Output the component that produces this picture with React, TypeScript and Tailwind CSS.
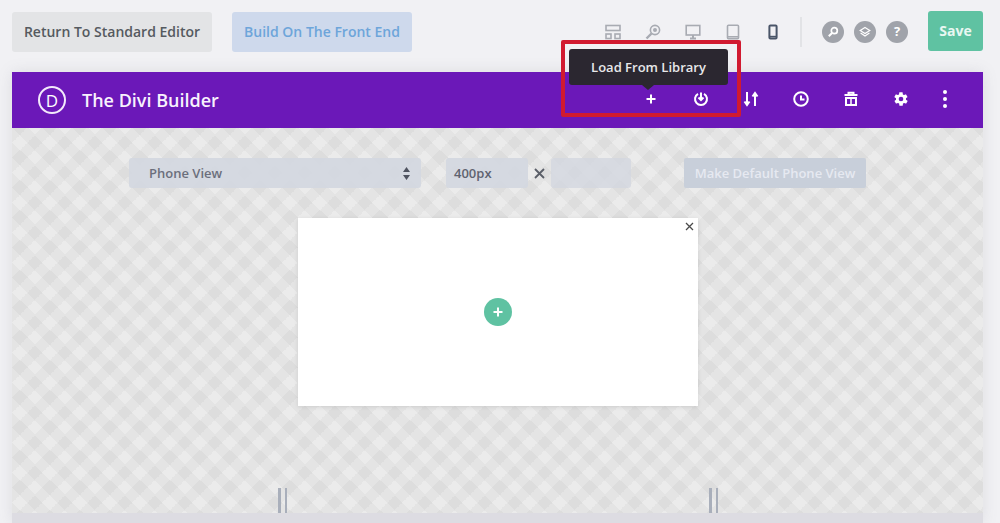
const GrayIcon = ({ children, className = "text-[#a8abb2]" }: { children: React.ReactNode; className?: string }) => (
  <svg className={`w-4 h-4 ${className}`} viewBox="0 0 16 16" fill="none" stroke="currentColor" strokeWidth="1.6">
    {children}
  </svg>
)

const PurpleIcon = ({ children }: { children: React.ReactNode }) => (
  <svg className="w-4 h-4 text-white" viewBox="0 0 16 16" fill="none" stroke="currentColor" strokeWidth="2">
    {children}
  </svg>
)

const Handle = () => (
  <div className="flex gap-1 h-[25px]">
    <div className="w-[3px] bg-[#a9afbb]"></div>
    <div className="w-[2px] bg-[#a9afbb]"></div>
  </div>
)

export default function App() {
  return (
    <div className="relative w-[1000px] h-[523px] overflow-hidden bg-[#f1f1f4] font-['Open_Sans',sans-serif]">
      {/* top toolbar */}
      <div className="flex items-center h-[72px] pl-3 pr-[17px] pb-2">
        <button className="w-[200px] h-10 rounded-[3px] bg-[#e3e4e6] text-sm font-semibold text-[#555a60]">Return To Standard Editor</button>
        <button className="w-[180px] h-10 ml-5 rounded-[3px] bg-[#ced9ec] text-sm font-semibold text-[#6da5da]">Build On The Front End</button>

        <div className="flex items-center gap-6 ml-[193px]">
          <GrayIcon>
            <rect x="1" y="1.5" width="14" height="5" />
            <rect x="1" y="10" width="5" height="4.5" />
            <rect x="10" y="10" width="5" height="4.5" />
          </GrayIcon>
          <GrayIcon>
            <circle cx="10" cy="6" r="4.6" />
            <circle cx="10" cy="6" r="1.2" fill="currentColor" />
            <path d="M6.5 9.5 1.5 14.5" strokeWidth="2.4" />
          </GrayIcon>
          <GrayIcon>
            <rect x="1.2" y="1.5" width="13.6" height="9.5" />
            <path d="M8 11v2.5M5 14.5h6" strokeWidth="2" />
          </GrayIcon>
          <GrayIcon>
            <rect x="2.5" y="1.2" width="11" height="13.6" rx="1" />
            <path d="M3 12.8h10" />
          </GrayIcon>
          <GrayIcon className="text-[#4a5568]">
            <rect x="4.4" y="1.5" width="7.2" height="13" rx="1" strokeWidth="2" />
            <path d="M5 12.6h6" strokeWidth="1.6" />
          </GrayIcon>
        </div>

        <div className="w-[2px] h-[30px] ml-[19px] bg-[#e2e3e6]"></div>

        <div className="flex items-center gap-2.5 ml-[20px]">
          <div className="flex items-center justify-center w-[22px] h-[22px] rounded-full bg-[#a0a3aa]">
            <svg className="w-3 h-3 text-white" viewBox="0 0 12 12" fill="none" stroke="currentColor" strokeWidth="1.7">
              <circle cx="7.3" cy="4.7" r="3" />
              <path d="M5 7 1.8 10.2" strokeWidth="2" />
            </svg>
          </div>
          <div className="flex items-center justify-center w-[22px] h-[22px] rounded-full bg-[#a0a3aa]">
            <svg className="w-3 h-3 text-white" viewBox="0 0 12 12" fill="none" stroke="currentColor" strokeWidth="1.2">
              <path d="M6 1.5 10.8 4.5 6 7.5 1.2 4.5Z" />
              <path d="M1.6 7 6 10 10.4 7" />
            </svg>
          </div>
          <div className="flex items-center justify-center w-[22px] h-[22px] rounded-full bg-[#a0a3aa] text-[13px] font-bold text-white">?</div>
        </div>

        <button className="w-[55px] h-10 ml-auto -mt-0.5 rounded-[3px] bg-[#5fc2a2] text-sm font-bold text-[#e9f7f2]">Save</button>
      </div>

      <div className="mx-3 w-[971px] shadow-[0_0_14px_rgba(120,120,130,0.16)]">
        {/* purple header */}
        <div className="flex items-center h-14 pl-[26px] bg-[#6b18b8] text-white">
          <div className="flex items-center justify-center w-7 h-7 rounded-full border-2 border-[#f3e9fb] text-[17px] leading-none">D</div>
          <h1 className="ml-[16px] text-lg font-semibold text-[#f8f2fd]">The Divi Builder</h1>
          <div className="flex items-center gap-[34px] ml-[424px] -mt-0.5">
            <PurpleIcon>
              <path d="M8 3.5v9M3.5 8h9" />
            </PurpleIcon>
            <PurpleIcon>
              <path d="M5 2.8a6 6 0 1 0 6 0" />
              <path d="M8 1.5v7M5.5 6.5 8 9l2.5-2.5" />
            </PurpleIcon>
            <PurpleIcon>
              <path d="M4 1v13M1.5 10.5 4 14l2.5-3.5M12 15V2M9.5 5.5 12 2l2.5 3.5" />
            </PurpleIcon>
            <PurpleIcon>
              <circle cx="8" cy="8" r="6.8" />
              <path d="M8 4.5V8.5h3.5" />
            </PurpleIcon>
            <PurpleIcon>
              <path d="M1.5 4h13M5.5 4V1.8h5V4" />
              <rect x="3" y="7" width="10" height="7" />
              <path d="M8 7v7" strokeWidth="1.5" />
            </PurpleIcon>
            <svg className="w-4 h-4 text-white" viewBox="0 0 24 24" fill="currentColor">
              <path d="M19.4 13c.1-.3.1-.7.1-1s0-.7-.1-1l2.1-1.6c.2-.2.2-.4.1-.6l-2-3.5c-.1-.2-.4-.3-.6-.2l-2.5 1c-.5-.4-1.1-.7-1.7-1l-.4-2.7c0-.2-.2-.4-.5-.4h-4c-.2 0-.4.2-.5.4l-.4 2.7c-.6.3-1.2.6-1.7 1l-2.5-1c-.2-.1-.5 0-.6.2l-2 3.5c-.1.2-.1.4.1.6L4.6 11c-.1.3-.1.7-.1 1s0 .7.1 1l-2.1 1.6c-.2.2-.2.4-.1.6l2 3.5c.1.2.4.3.6.2l2.5-1c.5.4 1.1.7 1.7 1l.4 2.7c0 .2.2.4.5.4h4c.2 0 .4-.2.5-.4l.4-2.7c.6-.3 1.2-.6 1.7-1l2.5 1c.2.1.5 0 .6-.2l2-3.5c.1-.2.1-.4-.1-.6L19.4 13ZM12 15.5a3.5 3.5 0 1 1 0-7 3.5 3.5 0 0 1 0 7Z" />
            </svg>
            <div className="flex flex-col gap-[3px]">
              <span className="w-1 h-1 rounded-full bg-white"></span>
              <span className="w-1 h-1 rounded-full bg-white"></span>
              <span className="w-1 h-1 rounded-full bg-white"></span>
            </div>
          </div>
        </div>

        {/* canvas */}
        <div className="flex flex-col h-[385px] pt-[30px] bg-[#ebebeb] bg-[linear-gradient(45deg,rgba(0,0,0,0.033)_25%,transparent_25%,transparent_50%,rgba(0,0,0,0.033)_50%,rgba(0,0,0,0.033)_75%,transparent_75%),linear-gradient(-45deg,rgba(0,0,0,0.033)_25%,transparent_25%,transparent_50%,rgba(0,0,0,0.033)_50%,rgba(0,0,0,0.033)_75%,transparent_75%)] bg-size-[30px_30px] bg-position-[8px_7px]">
          <div className="flex items-center h-[30px] pl-[117px]">
            <div className="flex items-center justify-between w-[292px] h-[30px] pl-5 pr-[11px] pt-px rounded-[3px] bg-[#d3d7e0]/90 text-[13px] font-semibold text-[#6b6f7c]">
              <span>Phone View</span>
              <svg className="w-[7px] h-[13px] text-[#4f5360]" viewBox="0 0 7 13" fill="currentColor">
                <path d="M3.5 0 7 5H0ZM3.5 13 0 8h7Z" />
              </svg>
            </div>
            <div className="flex items-center w-[82px] h-[30px] ml-[25px] pl-2 pt-px rounded-[3px] bg-[#d3d7e0]/90 text-[13px] font-semibold text-[#5f6370]">400px</div>
            <svg className="w-[11px] h-[11px] mx-[6px] text-[#5a5e68]" viewBox="0 0 11 11" fill="none" stroke="currentColor" strokeWidth="1.8">
              <path d="M1 1l9 9M10 1l-9 9" />
            </svg>
            <div className="w-20 h-[30px] rounded-[3px] bg-[#d3d7e0]/80"></div>
            <button className="w-[182px] h-[30px] ml-[53px] pt-px rounded-[2px] bg-[#c8cfda] text-[13px] font-semibold text-[#e6e9f1]">Make Default Phone View</button>
          </div>

          <div className="relative flex items-center justify-center w-[400px] h-[188px] ml-[286px] mt-[30px] bg-white shadow-[0_1px_4px_rgba(0,0,0,0.1)]">
            <svg className="absolute top-[4px] right-[4px] w-[9px] h-[9px] text-[#4a4a4a]" viewBox="0 0 9 9" fill="none" stroke="currentColor" strokeWidth="1.3">
              <path d="M1 1l7 7M8 1 1 8" />
            </svg>
            <div className="flex items-center justify-center w-7 h-7 rounded-full bg-[#5fc2a2]">
              <svg className="w-3 h-3 text-white" viewBox="0 0 12 12" fill="none" stroke="currentColor" strokeWidth="2">
                <path d="M6 1.5v9M1.5 6h9" />
              </svg>
            </div>
          </div>

          <div className="flex gap-[422px] mt-auto pl-[266px]">
            <Handle />
            <Handle />
          </div>
        </div>

        <div className="h-[10px] bg-[#dddce2]"></div>
      </div>

      {/* tooltip over the header */}
      <div className="absolute left-[569px] top-[49px] flex items-center justify-center w-[159px] h-9 pt-px rounded-[3px] bg-[#2b2730] text-[13px] font-semibold text-[#e8e8ea]">
        Load From Library
        <div className="absolute left-[73px] top-9 w-0 h-0 border-x-[6px] border-t-[5px] border-x-transparent border-t-[#2b2730]"></div>
      </div>

      {/* red highlight box */}
      <div className="absolute left-[561px] top-[40px] w-[180px] h-[77px] rounded-[2px] border-4 border-[#d11a30]"></div>
    </div>
  )
}
